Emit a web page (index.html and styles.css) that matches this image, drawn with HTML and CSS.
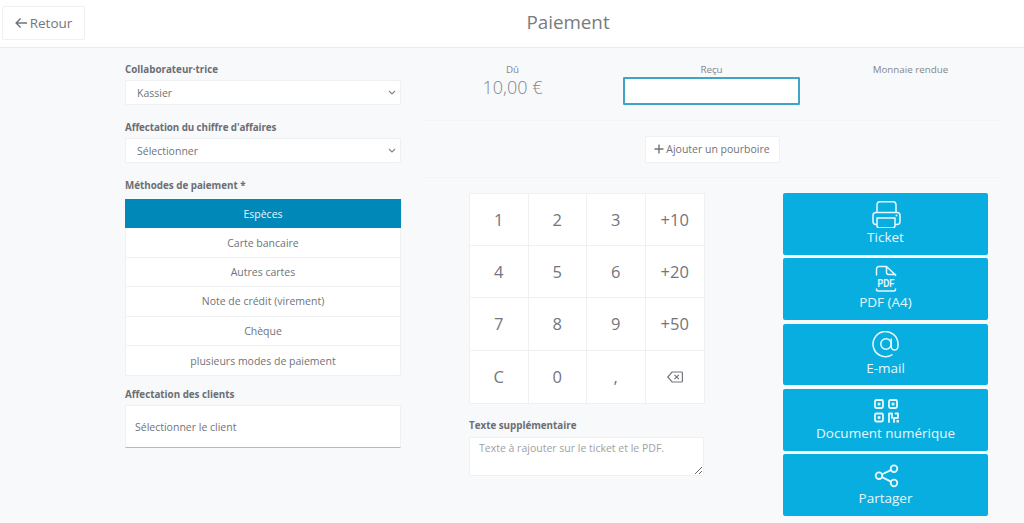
FILE: index.html
```html
<!DOCTYPE html>
<html lang="fr">
<head>
<meta charset="utf-8">
<title>Paiement</title>
<link rel="stylesheet" href="styles.css">
</head>
<body>
<header class="topbar">
  <button class="back" type="button">
    <svg class="back-icon" viewBox="0 0 14 12"><path d="M13 6H1.500M6 1.200 1.200 6 6 10.800"/></svg>
    <span>Retour</span>
  </button>
  <h1 class="title">Paiement</h1>
</header>
<main class="main">
  <section class="left">
    <label class="label">Collaborateur·trice</label>
    <select class="select"><option>Kassier</option></select>
    <label class="label label-tight">Affectation du chiffre d'affaires</label>
    <select class="select"><option>Sélectionner</option></select>
    <label class="label">Méthodes de paiement *</label>
    <ul class="methods">
      <li class="method active">Espèces</li>
      <li class="method">Carte bancaire</li>
      <li class="method">Autres cartes</li>
      <li class="method">Note de crédit (virement)</li>
      <li class="method">Chèque</li>
      <li class="method">plusieurs modes de paiement</li>
    </ul>
    <label class="label label-client">Affectation des clients</label>
    <div class="client">Sélectionner le client</div>
  </section>
  <section class="right">
    <div class="summary">
      <div class="sum-col"><div class="sum-label">Dû</div><div class="sum-value">10,00 €</div></div>
      <div class="sum-col"><div class="sum-label">Reçu</div><input class="sum-input" type="text"></div>
      <div class="sum-col"><div class="sum-label">Monnaie rendue</div></div>
    </div>
    <div class="tip-row">
      <button class="tip" type="button">
        <svg class="tip-icon" viewBox="0 0 10 10"><path d="M5 .5v9M.5 5h9"/></svg>
        <span>Ajouter un pourboire</span>
      </button>
    </div>
    <div class="lower">
      <div class="pad-col">
        <div class="keypad">
          <div class="key">1</div><div class="key">2</div><div class="key">3</div><div class="key">+10</div>
          <div class="key">4</div><div class="key">5</div><div class="key">6</div><div class="key">+20</div>
          <div class="key">7</div><div class="key">8</div><div class="key">9</div><div class="key">+50</div>
          <div class="key">C</div><div class="key">0</div><div class="key">,</div>
          <div class="key">
            <svg class="erase" viewBox="0 0 16 12"><path d="M5 1h9.600a.8.8 0 0 1 .8.8v8.400a.8.8 0 0 1-.8.8H5L.8 6zM7.500 3.800l4.400 4.400M11.900 3.800 7.500 8.200"/></svg>
          </div>
        </div>
        <label class="label label-extra">Texte supplémentaire</label>
        <textarea class="extra" placeholder="Texte à rajouter sur le ticket et le PDF."></textarea>
      </div>
      <div class="actions">
        <button class="action" type="button">
          <svg class="action-icon" viewBox="0 0 30 28"><path d="M6 12.500V4.500A3 3 0 0 1 9 1.800h13a3 3 0 0 1 3 2.700v8M6 24.500H5A3 3 0 0 1 2 21.500v-6A3 3 0 0 1 5 12.500h21a3 3 0 0 1 3 3v6a3 3 0 0 1-3 3h-2M6 18h18v7.500a2.500 2.500 0 0 1-2.500 2.500h-13A2.500 2.500 0 0 1 6 25.500z"/><circle class="dot" cx="25.500" cy="15.500" r="1"/></svg>
          <span>Ticket</span>
        </button>
        <button class="action" type="button">
          <svg class="action-icon" viewBox="0 0 30 28"><path d="M5.500 10V4a2.500 2.500 0 0 1 2.500-2.500h7.500l9 8.500v.5M15.500 1.500v6a2 2 0 0 0 2 2h7M5.500 24v.5a1.500 1.500 0 0 0 1.500 1.500h16a1.500 1.500 0 0 0 1.500-1.500V24"/><text class="pdf" x="15" y="22" text-anchor="middle" textLength="17" lengthAdjust="spacingAndGlyphs">PDF</text></svg>
          <span>PDF (A4)</span>
        </button>
        <button class="action" type="button">
          <svg class="action-icon" viewBox="0 0 30 28"><circle cx="15" cy="13" r="5.200"/><path d="M20.200 8v7.500a3.400 3.400 0 0 0 6.800 0V13a12.500 12.500 0 1 0-6 10.800"/></svg>
          <span>E-mail</span>
        </button>
        <button class="action" type="button">
          <svg class="action-icon icon-thick" viewBox="0 0 30 28"><rect x="4" y="4" width="8" height="8" rx="1.500"/><rect x="18" y="4" width="8" height="8" rx="1.500"/><rect x="4" y="17.500" width="8" height="8" rx="1.500"/><path d="M18 26v-8.500h3v4.500M24.500 17.500H27v4.500h-3.500M23 22v4"/><rect class="dot" x="6.700" y="6.700" width="2.700" height="2.700"/><rect class="dot" x="20.700" y="6.700" width="2.700" height="2.700"/><rect class="dot" x="6.700" y="20.200" width="2.700" height="2.700"/><rect class="dot" x="25.500" y="24" width="2.500" height="2.500"/></svg>
          <span>Document numérique</span>
        </button>
        <button class="action" type="button">
          <svg class="action-icon icon-thick" viewBox="0 0 30 28"><circle cx="8" cy="14.700" r="3.300"/><circle cx="23" cy="7.700" r="3.300"/><circle cx="23" cy="22" r="3.300"/><path d="M11 13.300 20 9.100M11 16.100l9 4.500"/></svg>
          <span>Partager</span>
        </button>
      </div>
    </div>
  </section>
</main>
</body>
</html>
```
FILE: styles.css
```css
* { box-sizing: border-box; }
html, body { margin: 0; height: 100%; overflow: hidden; }
body {
  background: #f8f9fb;
  color: #6f7379;
  font-family: "Open Sans", "Liberation Sans", sans-serif;
  font-size: 11px;
}
button, select, input, textarea { font-family: inherit; }

.topbar {
  position: relative;
  height: 48px;
  background: #fff;
  border-bottom: 1px solid #e9ecef;
  display: flex;
  align-items: flex-start;
  justify-content: center;
}
.back {
  position: absolute;
  left: 2px;
  top: 6px;
  width: 83px;
  height: 34px;
  display: flex;
  align-items: center;
  justify-content: center;
  gap: 2px;
  background: #fff;
  border: 1px solid #eef0f2;
  border-radius: 2px;
  color: #73777c;
  font-size: 13.500px;
  padding: 0;
}
.back-icon { width: 13px; height: 12px; fill: none; stroke: #6f7379; stroke-width: 1.500; }
.title {
  margin: 9px 0 0 112px;
  font-size: 18.800px;
  line-height: 27px;
  font-weight: 400;
  color: #777b80;
}

.main { display: flex; align-items: flex-start; padding-left: 125px; }
.left { width: 276px; padding-top: 15px; display: flex; flex-direction: column; }
.label {
  display: block;
  font-size: 9.800px;
  line-height: 14px;
  font-weight: 700;
  color: #6b6e73;
}
.label-tight { letter-spacing: -.08px; }
.select {
  appearance: none;
  width: 276px;
  height: 25px;
  margin: 3px 0 16px;
  padding: 0 11px;
  background: #fff url("data:image/svg+xml,%3Csvg xmlns='http://www.w3.org/2000/svg' viewBox='0 0 8 5'%3E%3Cpath d='M1 1l3 3 3-3' fill='none' stroke='%23808488' stroke-width='1.100'/%3E%3C/svg%3E") no-repeat right 4px center / 8px 5px;
  border: 1px solid #eef0f2;
  border-radius: 2px;
  color: #6f7379;
  font-size: 10.500px;
}
.methods {
  list-style: none;
  margin: 6px 0 0;
  padding: 0;
  width: 276px;
  background: #fff;
  border: 1px solid #eef0f2;
  border-top: 0;
  border-radius: 2px;
}
.method {
  height: 29.400px;
  display: flex;
  align-items: center;
  justify-content: center;
  border-bottom: 1px solid #eef0f2;
  font-size: 10.500px;
}
.method:last-child { border-bottom: 0; }
.method.active { background: #0088b8; color: #e8f6fb; border-bottom: 0; margin: 0 -1px; }
.label-client { margin-top: 12px; }
.client {
  width: 276px;
  height: 43px;
  margin-top: 3px;
  padding: 0 9px;
  display: flex;
  align-items: center;
  background: #fff;
  border: 1px solid #eef0f2;
  border-bottom: 1px solid #b5b8bc;
  border-radius: 2px 2px 0 0;
  font-size: 10.500px;
}

.right { width: 598px; margin-left: 12px; padding-top: 15px; }
.summary { display: flex; height: 57px; }
.sum-col { width: 199px; display: flex; flex-direction: column; align-items: center; }
.sum-label { font-size: 9.800px; line-height: 14px; color: #84878c; }
.sum-value { font-size: 18px; line-height: 20px; font-weight: 300; color: #83868b; }
.sum-input {
  width: 177px;
  height: 28px;
  background: #fff;
  border: 2px solid #3fa5c7;
  border-radius: 1px;
  outline: 0;
}
.tip-row {
  height: 58px;
  margin: 0 10px;
  display: flex;
  align-items: center;
  justify-content: center;
  border-top: 1px dotted #eef0f3;
  border-bottom: 1px dotted #eef0f3;
}
.tip {
  width: 135px;
  height: 27px;
  display: flex;
  align-items: center;
  justify-content: center;
  gap: 2px;
  background: #fff;
  border: 1px solid #eef0f2;
  border-radius: 2px;
  color: #6f7379;
  font-size: 10.500px;
  padding: 0;
}
.tip-icon { width: 10px; height: 10px; fill: none; stroke: #6f7379; stroke-width: 1.400; }

.lower { display: flex; align-items: flex-start; padding: 15px 0 0 56px; }
.pad-col { width: 236px; }
.keypad {
  display: grid;
  grid-template-columns: repeat(4, 58.500px);
  grid-auto-rows: 52.200px;
  width: 236px;
  background: #fff;
  border: 1px solid #eef0f2;
}
.key {
  display: flex;
  align-items: center;
  justify-content: center;
  border-right: 1px solid #eef0f2;
  border-bottom: 1px solid #eef0f2;
  font-size: 16.500px;
  color: #72767b;
}
.key:nth-child(4n) { border-right: 0; }
.key:nth-last-child(-n+4) { border-bottom: 0; }
.erase { width: 16px; height: 12px; fill: none; stroke: #72767b; stroke-width: 1.200; }
.label-extra { margin-top: 15px; }
.extra {
  display: block;
  width: 235px;
  height: 39px;
  margin-top: 4px;
  padding: 3px 9px;
  background: #fff;
  border: 1px solid #eef0f2;
  border-radius: 2px;
  font-size: 10.500px;
  line-height: 14px;
  outline: 0;
}
.extra::placeholder { color: #9ea1a5; opacity: 1; }

.actions {
  width: 205px;
  margin-left: 78px;
  display: flex;
  flex-direction: column;
  gap: 3.500px;
}
.action {
  height: 61.800px;
  display: flex;
  flex-direction: column;
  align-items: center;
  justify-content: flex-start;
  padding: 7px 0 0;
  background: #09aee0;
  border: 0;
  border-radius: 2px;
  color: #e6f7fc;
  font-size: 13.500px;
  line-height: 18px;
}
.action-icon {
  width: 30px;
  height: 28px;
  fill: none;
  stroke: #eaf8fd;
  stroke-width: 1.500;
  stroke-linecap: round;
  stroke-linejoin: round;
  flex: none;
}
.icon-thick { stroke-width: 1.800; }
.dot { fill: #eaf8fd; stroke: none; }
.pdf {
  fill: #eaf8fd;
  stroke: none;
  font-family: "Liberation Sans", sans-serif;
  font-size: 11px;
  font-weight: 700;
}
```
